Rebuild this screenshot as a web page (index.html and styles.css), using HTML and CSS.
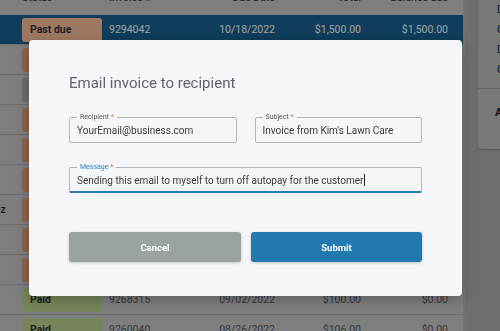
FILE: index.html
```html
<!DOCTYPE html>
<html lang="en">
<head>
    <meta charset="UTF-8">
    <meta name="viewport" content="width=device-width, initial-scale=1.0">
    <title>Invoices</title>
    <link rel="stylesheet" href="styles.css">
</head>
<body>

    <div class="page">
        <div class="invoices">
            <div class="row head">
                <span class="name">Customer</span>
                <span class="status">Status</span>
                <span>Invoice #</span>
                <span class="num">Due Date</span>
                <span class="num">Total</span>
                <span class="num">Balance due</span>
            </div>
            <div class="row selected">
                <span class="name">Kim Lee</span>
                <span class="badge first">Past due</span>
                <span>9294042</span>
                <span class="num">10/18/2022</span>
                <span class="num">$1,500.00</span>
                <span class="num">$1,500.00</span>
            </div>
            <div class="row">
                <span class="name">Kim Lee</span>
                <span class="badge due">Past due</span>
                <span>9291887</span>
                <span class="num">10/11/2022</span>
                <span class="num">$250.00</span>
                <span class="num">$250.00</span>
            </div>
            <div class="row">
                <span class="name">Ann Cole</span>
                <span class="badge draft">Draft</span>
                <span>9290356</span>
                <span class="num">10/08/2022</span>
                <span class="num">$80.00</span>
                <span class="num">$80.00</span>
            </div>
            <div class="row">
                <span class="name">Ann Cole</span>
                <span class="badge due">Past due</span>
                <span>9287710</span>
                <span class="num">10/01/2022</span>
                <span class="num">$80.00</span>
                <span class="num">$80.00</span>
            </div>
            <div class="row">
                <span class="name">Bo Park</span>
                <span class="badge due">Past due</span>
                <span>9284529</span>
                <span class="num">09/28/2022</span>
                <span class="num">$120.00</span>
                <span class="num">$120.00</span>
            </div>
            <div class="row">
                <span class="name">Bo Park</span>
                <span class="badge due">Past due</span>
                <span>9281143</span>
                <span class="num">09/21/2022</span>
                <span class="num">$120.00</span>
                <span class="num">$120.00</span>
            </div>
            <div class="row">
                <span class="name">Lu Martinez</span>
                <span class="badge due">Past due</span>
                <span>9277602</span>
                <span class="num">09/17/2022</span>
                <span class="num">$95.00</span>
                <span class="num">$95.00</span>
            </div>
            <div class="row">
                <span class="name">Jo Diaz</span>
                <span class="badge due">Past due</span>
                <span>9274418</span>
                <span class="num">09/12/2022</span>
                <span class="num">$95.00</span>
                <span class="num">$95.00</span>
            </div>
            <div class="row">
                <span class="name">Jo Diaz</span>
                <span class="badge due">Past due</span>
                <span>9271290</span>
                <span class="num">09/06/2022</span>
                <span class="num">$100.00</span>
                <span class="num">$100.00</span>
            </div>
            <div class="row">
                <span class="name">Al Wu</span>
                <span class="badge paid">Paid</span>
                <span>9268315</span>
                <span class="num">09/02/2022</span>
                <span class="num">$100.00</span>
                <span class="num">$0.00</span>
            </div>
            <div class="row">
                <span class="name">Al Wu</span>
                <span class="badge paid">Paid</span>
                <span>9260040</span>
                <span class="num">08/26/2022</span>
                <span class="num">$106.00</span>
                <span class="num">$0.00</span>
            </div>
        </div>

        <div class="side">
            <div class="side-card">
                <div class="side-item">Details</div>
                <div class="side-item">Customer</div>
                <div class="side-item">Due date</div>
                <div class="side-item">Created</div>
                <div class="side-action">Actions</div>
            </div>
        </div>
    </div>

    <div class="overlay"></div>

    <div class="modal">
        <h2 class="modal-title">Email invoice to recipient</h2>

        <div class="field-row">
            <div class="field">
                <label class="field-label">Recipient <span class="req">*</span></label>
                <div class="field-value">YourEmail@business.com</div>
            </div>
            <div class="field">
                <label class="field-label">Subject <span class="req">*</span></label>
                <div class="field-value">Invoice from Kim's Lawn Care</div>
            </div>
        </div>

        <div class="field active">
            <label class="field-label">Message <span class="req">*</span></label>
            <div class="field-value">Sending this email to myself to turn off autopay for the customer<span class="caret"></span></div>
        </div>

        <div class="modal-buttons">
            <button class="btn cancel">Cancel</button>
            <button class="btn submit">Submit</button>
        </div>
    </div>

</body>
</html>
```

FILE: styles.css
```css
body {
    margin: 0;
    font-family: Roboto, "Liberation Sans", sans-serif;
    background-color: #a9a9a9;
    overflow: hidden;
}
.page {
    display: flex;
    height: 331px;
}

/* invoice table */
.invoices {
    width: 523px;
    flex-shrink: 0;
    margin-left: -60px;
    margin-top: -14px;
    background-color: #c2c2c2;
    border-right: 2px solid #b4b4b4;
}
.row {
    display: grid;
    grid-template-columns: 66px 103px 76px 90px 86px 87px;
    align-items: center;
    height: 29px;
    padding-right: 15px;
    border-bottom: 1px solid #a8a8a8;
    font-size: 10.5px;
    color: #555;
}
.row.head {
    height: 22px;
    padding-bottom: 7px;
    font-weight: 500;
    color: #444;
    border-bottom: none;
}
.row.selected {
    background-color: #175f8c;
    color: #f4f6f8;
}
.row .name {
    padding-left: 10px;
    font-weight: 500;
    color: #222;
    white-space: nowrap;
    overflow: hidden;
}
.row .status {
    padding-left: 16px;
}
.row .num {
    text-align: right;
}
.badge {
    width: 72px;
    height: 24px;
    line-height: 24px;
    margin-left: 16px;
    padding-left: 8px;
    border-radius: 3px;
    font-weight: 700;
    color: #333;
}
.badge.first {
    background-color: #f5b896;
}
.badge.due {
    background-color: #d89b76;
}
.badge.draft {
    background-color: #a8a8a8;
}
.badge.paid {
    background-color: #b9cc8c;
}

/* right panel */
.side {
    flex: 1;
    padding-left: 13px;
}
.side-card {
    margin-top: -6px;
    padding: 6px 0 30px 19px;
    background-color: #b8b8b8;
    border-radius: 4px;
    box-shadow: 0 1px 2px rgba(0, 0, 0, 0.2);
    font-size: 11px;
    color: #222;
    white-space: nowrap;
    overflow: hidden;
}
.side-item {
    height: 20px;
    line-height: 20px;
}
.side-action {
    margin-top: 8px;
    padding-top: 17px;
    border-top: 1px solid #999;
    margin-left: -19px;
    padding-left: 17px;
    font-weight: 700;
}

.overlay {
    position: fixed;
    inset: 0;
    background-color: rgba(0, 0, 0, 0.35);
}

/* email dialog */
.modal {
    position: absolute;
    left: 29px;
    top: 40px;
    width: 353px;
    padding: 33px 40px 34px;
    background-color: #f4f6fa;
    border-radius: 4px;
    box-shadow: 0 4px 14px rgba(0, 0, 0, 0.25);
}
.modal-title {
    margin: 0 0 24px;
    font-size: 15px;
    line-height: 20px;
    font-weight: 400;
    color: #5f646a;
}
.field-row {
    display: grid;
    grid-template-columns: 1fr 1fr;
    gap: 18px;
    margin-bottom: 24px;
}
.field {
    position: relative;
    height: 24px;
    border: 1px solid #b3b5b8;
    border-radius: 2px;
}
.field.active {
    border-bottom: 2px solid #2a7ab8;
    height: 23px;
}
.field-label {
    position: absolute;
    left: 7px;
    top: -5px;
    padding: 0 3px;
    background-color: #f4f6fa;
    font-size: 7px;
    line-height: 9px;
    color: #555;
}
.field.active .field-label {
    color: #2f84c2;
}
.req {
    color: #ea6a3a;
}
.field-value {
    padding-left: 7px;
    font-size: 10px;
    line-height: 26px;
    color: #3a3a3a;
    white-space: nowrap;
}
.caret {
    display: inline-block;
    width: 1px;
    height: 12px;
    margin-left: 1px;
    vertical-align: -2px;
    background-color: #222;
}
.modal-buttons {
    display: grid;
    grid-template-columns: 172px 1fr;
    gap: 10px;
    margin-top: 39px;
}
.btn {
    height: 30px;
    border: none;
    border-radius: 3px;
    font-family: Roboto, "Liberation Sans", sans-serif;
    font-size: 9.5px;
    font-weight: 700;
    color: white;
    box-shadow: 0 1px 3px rgba(0, 0, 0, 0.2);
    cursor: pointer;
}
.btn.cancel {
    background-color: #9aa3a1;
}
.btn.submit {
    background-color: #2279b0;
}
```
